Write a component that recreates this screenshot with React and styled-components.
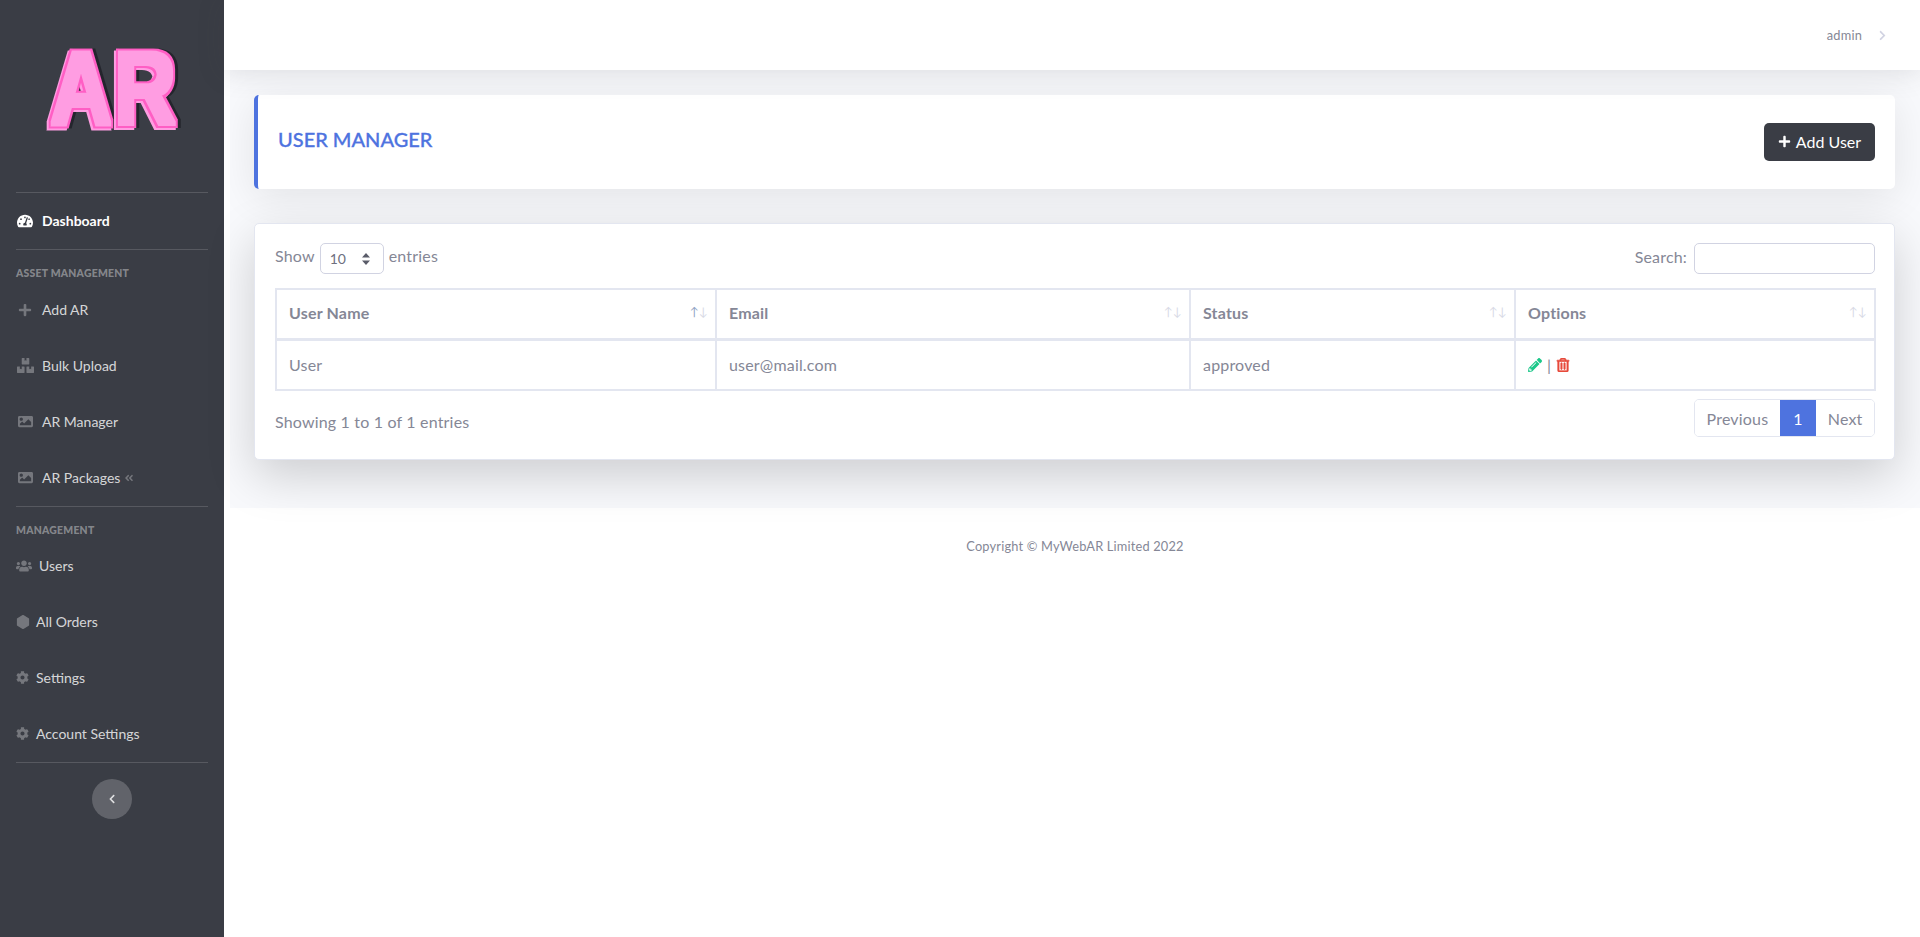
import React from "react";
import styled, { createGlobalStyle } from "styled-components";
import {
  FaTachometerAlt,
  FaPlus,
  FaBoxes,
  FaImage,
  FaAngleDoubleLeft,
  FaUsers,
  FaCog,
  FaChevronLeft,
  FaChevronRight,
  FaPencilAlt,
  FaRegTrashAlt,
} from "react-icons/fa";
import { BsHexagonFill } from "react-icons/bs";

const assetLinks = [
  { label: "Add AR", icon: FaPlus, size: 14 },
  { label: "Bulk Upload", icon: FaBoxes, size: 17 },
  { label: "AR Manager", icon: FaImage, size: 15 },
  { label: "AR Packages", icon: FaImage, size: 15, extra: true },
];

const managementLinks = [
  { label: "Users", icon: FaUsers, size: 16, gap: 7 },
  { label: "All Orders", icon: BsHexagonFill, size: 14, gap: 6 },
  { label: "Settings", icon: FaCog, size: 13, gap: 7 },
  { label: "Account Settings", icon: FaCog, size: 13, gap: 7 },
];

const columns = [
  { label: "User Name", width: 440, active: true },
  { label: "Email", width: 474 },
  { label: "Status", width: 325 },
  { label: "Options", width: 360 },
];

// one text, the outline and the offset shadow come from the filter
const Logo = () => (
  <svg width="140" height="130" viewBox="0 0 140 130">
    <filter id="logoLayers" x="-15%" y="-15%" width="130%" height="130%" colorInterpolationFilters="sRGB">
      <feMorphology in="SourceAlpha" operator="dilate" radius="4.6 3.6" result="thick" />
      <feMorphology in="SourceAlpha" operator="dilate" radius="2.8 2.2" result="thin" />

      <feOffset in="thick" dx="6" dy="-1" result="shadowShape" />
      <feFlood floodColor="#24252d" />
      <feComposite in2="shadowShape" operator="in" result="shadow" />

      <feOffset in="thick" dx="0" dy="1" result="baseShape" />
      <feFlood floodColor="#ff9de2" />
      <feComposite in2="baseShape" operator="in" result="base" />

      <feOffset in="thick" dx="3" dy="-1" result="lineShape" />
      <feFlood floodColor="#ff5ec4" />
      <feComposite in2="lineShape" operator="in" result="line" />

      <feOffset in="thin" dx="3" dy="-1" result="innerShape" />
      <feFlood floodColor="#ff9de2" />
      <feComposite in2="innerShape" operator="in" result="inner" />

      <feMerge>
        <feMergeNode in="shadow" />
        <feMergeNode in="base" />
        <feMergeNode in="line" />
        <feMergeNode in="inner" />
      </feMerge>
    </filter>
    <LogoText x="7.5" y="100" transform="scale(0.82 1)" filter="url(#logoLayers)">AR</LogoText>
  </svg>
);

const App = () => {
  return (
    <Page>
      <GlobalStyle />
      <Sidebar>
        <Brand>
          <Logo />
        </Brand>
        <Divider />
        <NavItem $active>
          <NavIcon $box><FaTachometerAlt size={16} color="#fff" /></NavIcon>
          Dashboard
        </NavItem>
        <Divider />
        <NavHeading $tall>Asset Management</NavHeading>
        {assetLinks.map((link) => (
          <NavItem key={link.label}>
            <NavIcon $box><link.icon size={link.size} /></NavIcon>
            {link.label}
            {link.extra && <ExtraIcon><FaAngleDoubleLeft size={10} /></ExtraIcon>}
          </NavItem>
        ))}
        <Divider />
        <NavHeading>Management</NavHeading>
        {managementLinks.map((link) => (
          <NavItem key={link.label}>
            <NavIcon $gap={link.gap}><link.icon size={link.size} /></NavIcon>
            {link.label}
          </NavItem>
        ))}
        <Divider />
        <ToggleButton><FaChevronLeft size={10} /></ToggleButton>
      </Sidebar>

      <Main>
        <Topbar>
          <UserName>admin</UserName>
          <FaChevronRight size={11} color="#d1d3e2" />
        </Topbar>

        <Content>
          <TitleCard>
            <Title>USER MANAGER</Title>
            <AddButton><FaPlus size={13} /> Add User</AddButton>
          </TitleCard>

          <TableCard>
            <Controls>
              <Label $line={25}>
                Show
                <PageSelect defaultValue="10">
                  <option value="10">10</option>
                  <option value="25">25</option>
                </PageSelect>
                entries
              </Label>
              <Label $line={28}>
                Search:
                <SearchInput type="search" />
              </Label>
            </Controls>

            <Table>
              <colgroup>
                {columns.map((col) => (
                  <col key={col.label} width={col.width} />
                ))}
              </colgroup>
              <thead>
                <tr>
                  {columns.map((col) => (
                    <HeadCell key={col.label}>
                      {col.label}
                      <SortArrows>
                        <Arrow $on={col.active}>↑</Arrow>
                        <Arrow>↓</Arrow>
                      </SortArrows>
                    </HeadCell>
                  ))}
                </tr>
              </thead>
              <tbody>
                <tr>
                  <Cell>User</Cell>
                  <Cell>user@mail.com</Cell>
                  <Cell>approved</Cell>
                  <Cell>
                    <Options>
                      <FaPencilAlt size={14} color="#1cc88a" />
                      <span>|</span>
                      <TrashIcon size={14} />
                    </Options>
                  </Cell>
                </tr>
              </tbody>
            </Table>

            <TableFooter>
              <Info>Showing 1 to 1 of 1 entries</Info>
              <Pagination>
                <PageButton>Previous</PageButton>
                <PageButton $current>1</PageButton>
                <PageButton>Next</PageButton>
              </Pagination>
            </TableFooter>
          </TableCard>
        </Content>

        <Footer>Copyright © MyWebAR Limited 2022</Footer>
      </Main>
    </Page>
  );
};

// styled components

const GlobalStyle = createGlobalStyle`
  * {
    box-sizing: border-box;
  }
  body {
    margin: 0;
    background: #fff;
    color: #858796;
    font-family: "Lato", "Noto Sans", sans-serif;
    font-size: 16px;
    letter-spacing: 0.18px;
  }
`;

const Page = styled.div`
  display: flex;
  min-height: 100vh;
`;

const Sidebar = styled.aside`
  width: 224px;
  flex-shrink: 0;
  background: #3a3d45;
  display: flex;
  flex-direction: column;
`;

const Brand = styled.div`
  height: 192px;
  display: flex;
  justify-content: center;
  padding: 25px 0 0;
`;

const LogoText = styled.text`
  font-family: "Liberation Sans", sans-serif;
  font-weight: 700;
  font-size: 104px;
  letter-spacing: 3px;
`;

const Divider = styled.hr`
  width: 192px;
  height: 1px;
  margin: 0 16px;
  border: 0;
  background: rgba(255, 255, 255, 0.15);
  flex-shrink: 0;
`;

const NavItem = styled.a`
  height: 56px;
  padding: 0 16px 1px;
  display: flex;
  align-items: center;
  font-size: 14px;
  letter-spacing: 0;
  font-weight: ${(p) => (p.$active ? 700 : 400)};
  color: ${(p) => (p.$active ? "#fff" : "rgba(255, 255, 255, 0.8)")};
`;

const NavIcon = styled.span`
  display: inline-flex;
  justify-content: center;
  width: ${(p) => (p.$box ? "18px" : "auto")};
  margin-right: ${(p) => (p.$box ? 8 : p.$gap)}px;
  color: rgba(255, 255, 255, 0.3);
`;

const ExtraIcon = styled.span`
  display: inline-flex;
  margin-left: 4px;
  color: rgba(255, 255, 255, 0.3);
`;

const NavHeading = styled.div`
  height: ${(p) => (p.$tall ? 32 : 31)}px;
  padding: 17px 16px 0;
  font-size: 10.4px;
  font-weight: 900;
  line-height: 12px;
  letter-spacing: 0.25px;
  text-transform: uppercase;
  color: rgba(255, 255, 255, 0.4);
`;

const ToggleButton = styled.button`
  width: 40px;
  height: 40px;
  margin: 16px auto 0;
  border: 0;
  border-radius: 50%;
  background: rgba(255, 255, 255, 0.2);
  color: rgba(255, 255, 255, 0.8);
  display: flex;
  align-items: center;
  justify-content: center;
`;

const Main = styled.main`
  flex: 1;
  min-width: 0;
  display: flex;
  flex-direction: column;
`;

const Topbar = styled.header`
  height: 70px;
  background: #fff;
  display: flex;
  align-items: center;
  justify-content: flex-end;
  gap: 15px;
  padding: 0 32px 0 0;
  position: relative;
  z-index: 2;
  box-shadow: 0 0.15rem 1.75rem 0 rgba(58, 59, 69, 0.15);
`;

const UserName = styled.span`
  font-size: 12.8px;
`;

const Content = styled.section`
  margin-left: 6px;
  height: 438px;
  padding: 25px 25px 0 24px;
  background: #f8f9fc;
  display: flex;
  flex-direction: column;
  gap: 34px;
`;

const TitleCard = styled.div`
  height: 94px;
  background: #fff;
  border-left: 4px solid #4e73df;
  border-radius: 5px;
  box-shadow: 0 0.5rem 2.5rem rgba(0, 0, 0, 0.09);
  display: flex;
  align-items: flex-start;
  justify-content: space-between;
  padding: 28px 20px 0;
`;

const Title = styled.h1`
  margin: 4px 0 0;
  font-size: 20px;
  font-weight: 500;
  line-height: 24px;
  letter-spacing: 0;
  -webkit-text-stroke: 0.3px #4e73df;
  color: #4e73df;
`;

const AddButton = styled.button`
  height: 38px;
  width: 111px;
  padding: 0 0 2px;
  border: 0;
  border-radius: 5px;
  background: #3a3d45;
  color: #fff;
  font: inherit;
  display: inline-flex;
  align-items: center;
  justify-content: center;
  gap: 5px;
`;

const TableCard = styled.div`
  height: 237px;
  background: #fff;
  border: 1px solid #e3e6f0;
  border-radius: 5px;
  box-shadow: 0 1rem 3rem rgba(0, 0, 0, 0.175);
  padding: 19px 19px 0 20px;
`;

const Controls = styled.div`
  display: flex;
  justify-content: space-between;
  height: 31px;
`;

const Label = styled.label`
  display: flex;
  align-items: flex-start;
  gap: 5px;
  line-height: ${(p) => p.$line}px;
`;

const PageSelect = styled.select`
  appearance: none;
  width: 64px;
  height: 31px;
  padding: 0 0 0 9px;
  border: 1px solid #d1d3e2;
  border-radius: 5px;
  color: #6e707e;
  font: inherit;
  font-size: 14px;
  background: #fff url("data:image/svg+xml,%3Csvg xmlns='http://www.w3.org/2000/svg' width='8' height='12'%3E%3Cpath fill='%235a5c69' d='M4 0l4 4.500H0zM4 12L0 7.500h8z'/%3E%3C/svg%3E") no-repeat right 13px center;
`;

const SearchInput = styled.input`
  width: 181px;
  height: 31px;
  margin-left: 2px;
  border: 1px solid #d1d3e2;
  border-radius: 5px;
  background: #fff;
`;

const Table = styled.table`
  width: 1599px;
  margin-top: 14px;
  table-layout: fixed;
  border-collapse: collapse;
  border: 2px solid #e3e6f0;
`;

const HeadCell = styled.th`
  position: relative;
  height: 50px;
  padding: 0 12px 2px;
  border: 2px solid #e3e6f0;
  border-bottom-width: 3px;
  text-align: left;
  font-weight: 700;
`;

const SortArrows = styled.span`
  position: absolute;
  top: 14px;
  right: 7px;
  display: flex;
  font-size: 12px;
  font-weight: 400;
`;

const Arrow = styled.span`
  color: ${(p) => (p.$on ? "#8fa3c4" : "#d8dae6")};
`;

const Cell = styled.td`
  height: 51px;
  padding: 0 12px;
  border: 2px solid #e3e6f0;
`;

const Options = styled.div`
  display: flex;
  align-items: center;
  gap: 5px;
`;

const TrashIcon = styled(FaRegTrashAlt)`
  color: #e74a3b;
  stroke: #e74a3b;
  stroke-width: 24px;
`;

const TableFooter = styled.div`
  margin-top: 8px;
  display: flex;
  align-items: flex-start;
  justify-content: space-between;
`;

const Info = styled.span`
  padding-top: 13px;
`;

const Pagination = styled.div`
  display: flex;
  height: 38px;
  border: 1px solid #e3e6f0;
  border-radius: 5px;
  overflow: hidden;
`;

const PageButton = styled.span`
  display: flex;
  align-items: center;
  padding: 0 ${(p) => (p.$current ? 13.5 : 11.5)}px;
  background: ${(p) => (p.$current ? "#4e73df" : "#fff")};
  color: ${(p) => (p.$current ? "#fff" : "#858796")};
`;

const Footer = styled.footer`
  padding: 30px 0 0 6px;
  text-align: center;
  font-size: 12.8px;
  line-height: 16px;
`;

export default App;
